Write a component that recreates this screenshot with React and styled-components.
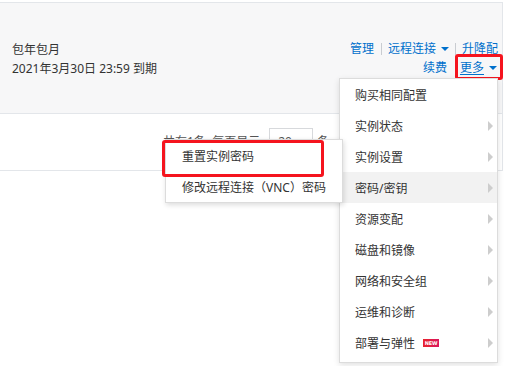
import React from "react";
import styled, { createGlobalStyle } from "styled-components";

const GlobalStyle = createGlobalStyle`
  html, body {
    margin: 0;
    padding: 0;
    background: #fff;
  }
  body {
    font-family: "Noto Sans", "Noto Sans CJK SC", sans-serif;
    font-size: 12px;
    color: #333;
  }
  * {
    box-sizing: border-box;
  }
`;

const menuItems = [
  { label: "购买相同配置" },
  { label: "实例状态", sub: true },
  { label: "实例设置", sub: true },
  { label: "密码/密钥", sub: true, active: true },
  { label: "资源变配", sub: true },
  { label: "磁盘和镜像", sub: true },
  { label: "网络和安全组", sub: true },
  { label: "运维和诊断", sub: true },
  { label: "部署与弹性", sub: true, isNew: true },
];

function App() {
  return (
    <>
      <GlobalStyle />
      <Page>
        <Table>
          <InstanceRow>
            <BillingCell>
              <span>包年包月</span>
              <span>2021年3月30日 23:59 到期</span>
            </BillingCell>
            <ActionCell>
              <ActionLine>
                <Link>管理</Link>
                <Separator />
                <Link>远程连接</Link>
                <Caret />
                <Separator />
                <Link>升降配</Link>
              </ActionLine>
              <ActionLine>
                <Link>续费</Link>
                <MoreLink>
                  <Link $underline>更多</Link>
                  <Caret />
                </MoreLink>
              </ActionLine>
            </ActionCell>
          </InstanceRow>
          <Pager>
            <span>共有1条, 每页显示</span>
            <PageSize>20</PageSize>
            <span>条</span>
          </Pager>
        </Table>

        <Dropdown>
          {menuItems.map((item) => (
            <MenuItem key={item.label} $active={item.active}>
              <MenuLabel>
                {item.label}
                {item.isNew && <NewBadge>NEW</NewBadge>}
              </MenuLabel>
              {item.sub && <SubArrow />}
            </MenuItem>
          ))}
        </Dropdown>

        <SubMenu>
          <SubItem $marked>重置实例密码</SubItem>
          <SubItem>修改远程连接（VNC）密码</SubItem>
        </SubMenu>
      </Page>
    </>
  );
}

const Page = styled.div`
  position: relative;
  width: 513px;
  height: 366px;
  overflow: hidden;
  padding-top: 2px;
`;

const Table = styled.div`
  width: 503px;
  border-top: 1px solid #e3e6ea;
  border-right: 1px solid #e3e6ea;
`;

const InstanceRow = styled.div`
  height: 111px;
  background: #f7f7f8;
  border-bottom: 1px solid #e3e6ea;
  display: flex;
  justify-content: space-between;
  align-items: center;
  padding: 0 4px 0 12px;
`;

const BillingCell = styled.div`
  display: flex;
  flex-direction: column;
  line-height: 19px;
  color: #333;
  padding-top: 1px;
`;

const ActionCell = styled.div`
  display: flex;
  flex-direction: column;
  align-items: flex-end;
  line-height: 19px;
`;

const ActionLine = styled.div`
  display: flex;
  align-items: center;
`;

const Link = styled.span`
  color: #0070cc;
  text-decoration: ${(p) => (p.$underline ? "underline" : "none")};
  text-underline-offset: 2px;
`;

const Separator = styled.span`
  width: 1px;
  height: 12px;
  background: #c9ccd1;
  margin: 0 6px 0 7px;
`;

const Caret = styled.span`
  width: 0;
  height: 0;
  margin: 1px -1px 0 5px;
  border-left: 4px solid transparent;
  border-right: 4px solid transparent;
  border-top: 4px solid #0070cc;
`;

const MoreLink = styled.span`
  position: relative;
  display: flex;
  align-items: center;
  margin-left: 13px;
  margin-right: 2px;

  &::after {
    content: "";
    position: absolute;
    left: -5px;
    right: -7px;
    top: -4px;
    bottom: -3px;
    border: 3px solid #f5141e;
    border-radius: 3px;
  }
`;

const Pager = styled.div`
  height: 57px;
  border-bottom: 1px solid #e3e6ea;
  display: flex;
  align-items: center;
  padding-left: 163px;
  padding-bottom: 2px;
  color: #555;
`;

const PageSize = styled.span`
  width: 44px;
  height: 26px;
  margin: 0 4px 0 9px;
  border: 1px solid #d7d9dc;
  background: #fff;
  padding: 4px 8px;
  font-size: 12px;
`;

const Dropdown = styled.div`
  position: absolute;
  left: 339px;
  top: 78px;
  width: 159px;
  padding-bottom: 4px;
  background: #fff;
  border: 1px solid #dcdcdc;
  box-shadow: 0 2px 6px rgba(0, 0, 0, 0.12);
`;

const MenuItem = styled.div`
  height: 31px;
  display: flex;
  align-items: center;
  justify-content: space-between;
  padding: 0 4px 0 15px;
  background: ${(p) => (p.$active ? "#f2f2f2" : "#fff")};
  color: #333;
`;

const MenuLabel = styled.span`
  display: flex;
  align-items: center;
`;

const SubArrow = styled.span`
  width: 0;
  height: 0;
  border-top: 5px solid transparent;
  border-bottom: 5px solid transparent;
  border-left: 5px solid #cdcdcd;
`;

const NewBadge = styled.span`
  margin-left: 8px;
  width: 16px;
  height: 8px;
  background: linear-gradient(90deg, #e8242c, #d9165f);
  color: #fff;
  font-family: "DejaVu Sans", sans-serif;
  font-size: 5px;
  font-weight: bold;
  line-height: 8px;
  text-align: center;
  letter-spacing: -0.2px;
`;

const SubMenu = styled.div`
  position: absolute;
  left: 165px;
  top: 139px;
  width: 178px;
  background: #fff;
  border: 1px solid #dcdcdc;
  box-shadow: 1px 2px 5px rgba(0, 0, 0, 0.14);
  z-index: 2;
`;

const SubItem = styled.div`
  position: relative;
  height: 31px;
  display: flex;
  align-items: center;
  padding-left: 16px;
  color: #333;
  white-space: nowrap;

  &::after {
    content: "";
    display: ${(p) => (p.$marked ? "block" : "none")};
    position: absolute;
    left: -4px;
    top: 0;
    width: 156px;
    height: 31px;
    border: 3px solid #f5141e;
    border-radius: 3px;
  }
`;

export default App;
